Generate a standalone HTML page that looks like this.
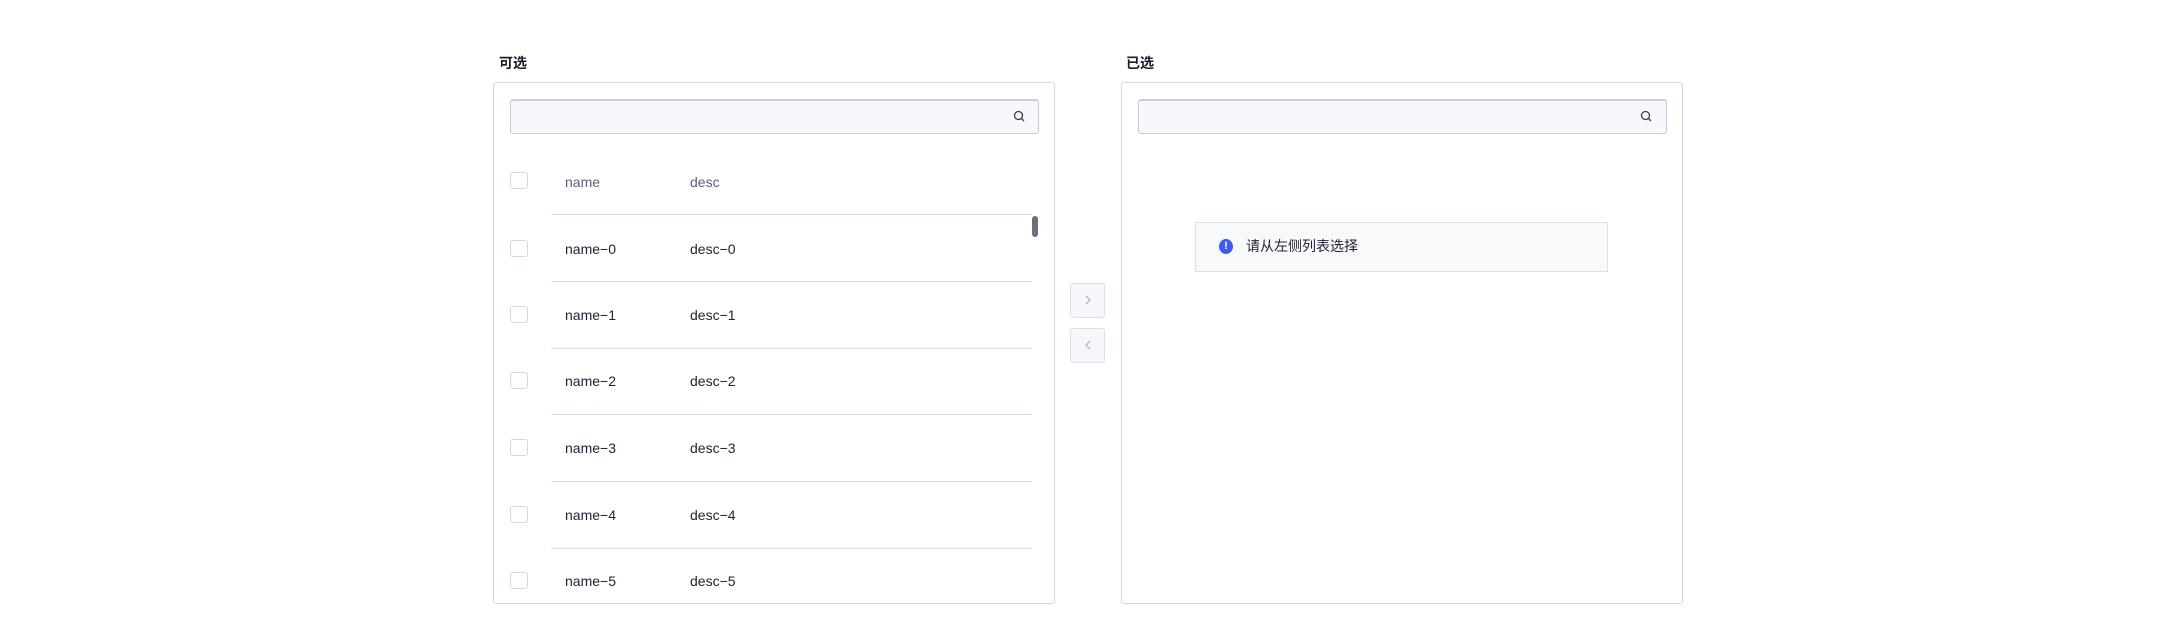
<!DOCTYPE html>
<html><head><meta charset="utf-8"><style>
*{box-sizing:border-box;margin:0;padding:0}
body{width:2160px;height:641px;background:#fff;position:relative;overflow:hidden;font-family:"Liberation Sans","Noto Sans CJK SC",sans-serif;color:#1f2233}
.abs{position:absolute}
.title{font-size:14px;font-weight:bold;color:#1a1d2b}
.panel{border:1px solid #d3d6e6;border-radius:3px;background:#fff}
.search{border:1px solid #c6c9dc;border-top:2px solid #c9cce0;border-radius:3px;background:#f7f8fb}
.cb{width:18px;height:17px;border:1px solid #d5d8e4;border-radius:3px;background:#fff}
.txt{font-size:14px;line-height:16px}
.line{height:1px;background:#dcdfea}
.btn{width:35px;height:35px;border:1px solid #dcdfea;border-radius:3px;background:#f6f7fa}
</style></head><body>
<div class="abs title" style="left:499px;top:53px">可选</div>
<div class="abs title" style="left:1126px;top:53px">已选</div>

<div class="abs panel" style="left:493px;top:82px;width:562px;height:522px"></div>
<div class="abs search" style="left:510px;top:99px;width:529px;height:35px"></div>
<svg class="abs" style="left:1013px;top:110px" width="13" height="13" viewBox="0 0 13 13"><circle cx="5.5" cy="5.5" r="4" fill="none" stroke="#3a3f55" stroke-width="1.3"/><path d="M8.5 8.5L11 11" stroke="#3a3f55" stroke-width="1.3"/></svg>

<div class="abs cb" style="left:510px;top:172px"></div>
<div class="abs txt" style="left:565px;top:174px;color:#5a6080">name</div>
<div class="abs txt" style="left:690px;top:174px;color:#5a6080">desc</div>
<div class="abs line" style="left:551px;top:214px;width:481px"></div>
<div class="abs" style="left:1032px;top:216px;width:6px;height:21px;border-radius:3px;background:#6b6f80"></div>

<div class="abs cb" style="left:510px;top:240px"></div><div class="abs txt" style="left:565px;top:241px">name−0</div><div class="abs txt" style="left:690px;top:241px">desc−0</div>
<div class="abs line" style="left:551px;top:281px;width:481px"></div>
<div class="abs cb" style="left:510px;top:306px"></div><div class="abs txt" style="left:565px;top:307px">name−1</div><div class="abs txt" style="left:690px;top:307px">desc−1</div>
<div class="abs line" style="left:551px;top:348px;width:481px"></div>
<div class="abs cb" style="left:510px;top:372px"></div><div class="abs txt" style="left:565px;top:373px">name−2</div><div class="abs txt" style="left:690px;top:373px">desc−2</div>
<div class="abs line" style="left:551px;top:414px;width:481px"></div>
<div class="abs cb" style="left:510px;top:439px"></div><div class="abs txt" style="left:565px;top:440px">name−3</div><div class="abs txt" style="left:690px;top:440px">desc−3</div>
<div class="abs line" style="left:551px;top:481px;width:481px"></div>
<div class="abs cb" style="left:510px;top:506px"></div><div class="abs txt" style="left:565px;top:507px">name−4</div><div class="abs txt" style="left:690px;top:507px">desc−4</div>
<div class="abs line" style="left:551px;top:548px;width:481px"></div>
<div class="abs cb" style="left:510px;top:572px"></div><div class="abs txt" style="left:565px;top:573px">name−5</div><div class="abs txt" style="left:690px;top:573px">desc−5</div>

<div class="abs btn" style="left:1070px;top:283px"></div>
<svg class="abs" style="left:1081px;top:293px" width="14" height="14"><path d="M5 3L9 7L5 11" fill="none" stroke="#a9adc4" stroke-width="1.2"/></svg>
<div class="abs btn" style="left:1070px;top:328px"></div>
<svg class="abs" style="left:1081px;top:338px" width="14" height="14"><path d="M9 3L5 7L9 11" fill="none" stroke="#a9adc4" stroke-width="1.2"/></svg>

<div class="abs panel" style="left:1121px;top:82px;width:562px;height:522px"></div>
<div class="abs search" style="left:1138px;top:99px;width:529px;height:35px"></div>
<svg class="abs" style="left:1640px;top:110px" width="13" height="13" viewBox="0 0 13 13"><circle cx="5.5" cy="5.5" r="4" fill="none" stroke="#3a3f55" stroke-width="1.3"/><path d="M8.5 8.5L11 11" stroke="#3a3f55" stroke-width="1.3"/></svg>
<div class="abs" style="left:1195px;top:222px;width:413px;height:50px;border:1px solid #dcdfea;background:#f8f9fb"></div>
<div class="abs" style="left:1219px;top:239px;width:14px;height:15px;border-radius:50%;background:#3d5af1;color:#fff;font-size:11px;font-weight:bold;text-align:center;line-height:15px">!</div>
<div class="abs" style="left:1246px;top:238px;font-size:14px;line-height:16px;color:#1f2233">请从左侧列表选择</div>
</body></html>
